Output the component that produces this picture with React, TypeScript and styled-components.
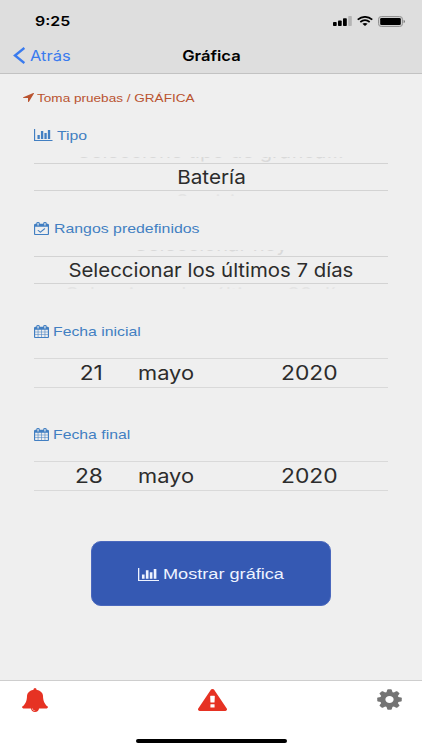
import React from "react";
import styled, { createGlobalStyle } from "styled-components";

const Global = createGlobalStyle`
  * { box-sizing: border-box; }
  html, body { margin: 0; padding: 0; background: #efefef; }
`;

const Screen = styled.div`
  width: 422px;
  height: 750px;
  display: flex;
  flex-direction: column;
  overflow: hidden;
  background: #efefef;
  font-family: "Liberation Sans", Arial, sans-serif;
`;

const Header = styled.header`
  height: 74px;
  flex: none;
  background: #dedede;
  border-bottom: 1px solid #c2c2c2;
  font-family: Inter, sans-serif;
`;

const StatusBar = styled.div`
  height: 37px;
  padding: 5px 17px 0 35px;
  display: flex;
  align-items: center;
  justify-content: space-between;
`;

const StatusIcons = styled.div`
  display: flex;
  align-items: center;
  gap: 5px;
`;

const NavBar = styled.nav`
  height: 37px;
  padding: 0 13px;
  display: grid;
  grid-template-columns: 1fr auto 1fr;
  align-items: center;
`;

const BackButton = styled.a`
  display: flex;
  align-items: center;
  gap: 5px;
  color: #3a7bee;
`;

const Text = styled.span<{ $size: number; $stretch?: number; $weight?: number; $center?: boolean }>`
  display: inline-block;
  white-space: nowrap;
  font-size: ${(p) => p.$size}px;
  font-weight: ${(p) => p.$weight ?? 400};
  line-height: 1.2;
  transform: scaleX(${(p) => p.$stretch ?? 1});
  transform-origin: ${(p) => (p.$center ? "center" : "left")} center;
`;

const Content = styled.main`
  flex: 1;
  padding: 16px 34px 0;
`;

const Breadcrumb = styled.div`
  height: 15px;
  margin-left: -11px;
  display: flex;
  align-items: center;
  gap: 3px;
  color: #b9532f;
`;

const Field = styled.section<{ $top: number }>`
  margin-top: ${(p) => p.$top}px;
`;

const FieldLabel = styled.div<{ $gap: number }>`
  height: 20px;
  display: flex;
  align-items: center;
  gap: ${(p) => p.$gap}px;
  color: #427fc2;
  & > svg { margin-bottom: 2px; }
`;

const FadedRow = styled.div<{ $edge: "top" | "bottom" }>`
  height: ${(p) => (p.$edge === "top" ? 17 : 5)}px;
  display: flex;
  justify-content: center;
  align-items: ${(p) => (p.$edge === "top" ? "flex-end" : "flex-start")};
  overflow: hidden;
  font-family: Inter, sans-serif;
  color: ${(p) => (p.$edge === "top" ? "#d9d9d9" : "#e4e4e4")};
  ${(p) => p.$edge === "top" && "clip-path: inset(11px 0 0 0);"}
`;

const Selected = styled.div`
  height: 28px;
  padding-top: 2px;
  display: flex;
  align-items: center;
  justify-content: center;
  border-top: 1px solid #d3d3d3;
  border-bottom: 1px solid #d3d3d3;
  font-family: Inter, sans-serif;
  color: #2c2c2c;
`;

const DateRow = styled.div`
  height: 30px;
  margin-top: 16px;
  padding-top: 2px;
  display: grid;
  grid-template-columns: 69px 35px 143px auto;
  align-items: center;
  border-top: 1px solid #d9d9d9;
  border-bottom: 1px solid #d9d9d9;
  font-family: Inter, sans-serif;
  color: #2c2c2c;
`;

const Day = styled.div`
  display: flex;
  justify-content: flex-end;
  ${Text} { transform-origin: right center; }
`;

const Gap = styled.div``;

const ChartButton = styled.button`
  width: 240px;
  height: 65px;
  margin: 50px auto 0 57px;
  padding: 1px 0 0 46px;
  display: flex;
  align-items: center;
  gap: 4px;
  border: 1px solid #4a68bd;
  border-radius: 10px;
  background: #3559b3;
  color: #eef3ff;
  font-family: "Liberation Sans", Arial, sans-serif;
`;

const Footer = styled.footer`
  height: 70px;
  flex: none;
  padding-top: 6px;
  border-top: 1px solid #cecece;
  background: #fff;
`;

const Tabs = styled.div`
  height: 25px;
  padding: 0 20px 0 22px;
  display: grid;
  grid-template-columns: 1fr auto 1fr;
  align-items: center;
  & > :last-child { justify-self: end; }
`;

const HomeIndicator = styled.div`
  width: 151px;
  height: 4px;
  margin: 27px auto 0;
  border-radius: 2px;
  background: #000;
`;

const Glyph = styled.svg`
  display: block;
  flex: none;
  fill: currentColor;
`;

type IconProps = { w: number; h: number; box: string; d: string; color?: string };
const Icon = ({ w, h, box, d, color }: IconProps) => (
  <Glyph width={w} height={h} viewBox={box} preserveAspectRatio="none" color={color}>
    <path d={d} />
  </Glyph>
);

const Gear = () => (
  <Glyph width="25" height="21" viewBox="-50 -50 100 100" preserveAspectRatio="none" color="#747474">
    <circle r="27" fill="none" stroke="currentColor" strokeWidth="21" />
    {[0, 45, 90, 135, 180, 225, 270, 315].map((angle) => (
      <path key={angle} transform={`rotate(${angle})`} d="M-12-34L-9-47Q-8-49-6-49H6Q8-49 9-47L12-34Z" />
    ))}
  </Glyph>
);

const FRAME =
  "M576 448V160q0-13-9.5-22.5T544 128h-64q-13 0-22.5 9.5T448 160v288q0 13 9.5 22.5T480 480h64q13 0 22.5-9.5T576 448zm768 0V160q0-13-9.5-22.5T1312 128h-64q-13 0-22.5 9.5T1216 160v288q0 13 9.5 22.5t22.5 9.5h64q13 0 22.5-9.5t9.5-22.5zm384-64v1280q0 52-38 90t-90 38H192q-52 0-90-38t-38-90V384q0-52 38-90t90-38h128v-96q0-66 47-113T480 0h64q66 0 113 47t47 113v96h384v-96q0-66 47-113t113-47h64q66 0 113 47t47 113v96h128q52 0 90 38t38 90z";
const CALENDAR =
  "M192 1664h288v-288H192v288zm352 0h320v-288H544v288zm-352-352h288V992H192v320zm352 0h320V992H544v320zM192 928h288V640H192v288zm736 736h320v-288H928v288zM544 928h320V640H544v288zm768 736h288v-288h-288v288zm-384-352h320V992H928v320zm384 0h288V992h-288v320zM928 928h320V640H928v288zm384 0h288V640h-288v288z" + FRAME;
const CALENDAR_CHECK =
  "M1303 964l-512 512q-10 9-23 9t-23-9l-288-288q-9-10-9-23t9-22l46-46q9-9 22-9t23 9l220 220 444-444q10-9 23-9t22 9l46 46q9 9 9 22t-9 23zM192 1664h1408V640H192v1024z" + FRAME;
const CHART =
  "M640 896v512H384V896h256zm384-512v1024H768V384h256zm1024 1152v128H0V128h128v1408h1920zM1408 640v768h-256V640h256zm384-384v1152h-256V256h256z";
const ARROW =
  "M1593 349l-640 1280q-17 35-57 35-5 0-15-2-22-5-35.5-22.5T832 1600v-576H256q-22 0-39.5-13.5T194 975t4-42 29-30l1280-640q13-7 29-7 27 0 45 19 15 14 18.5 34.5T1593 349z";
const BELL =
  "M912 1696q0-16-16-16-59 0-101.5-42.5T752 1536q0-16-16-16t-16 16q0 73 51.5 124.5T896 1712q16 0 16-16zm816-288q0 52-38 90t-90 38h-448q0 106-75 181t-181 75-181-75-75-181H192q-52 0-90-38t-38-90q50-42 91-88t85-119.5 74.5-158.5 50-206T384 576q0-152 117-282.5T808 135q-8-19-8-39 0-40 28-68t68-28 68 28 28 68q0 20-8 39 190 28 307 158.5T1408 576q0 139 19.5 260t50 206 74.5 158.5 85 119.5 91 88z";
const WARNING =
  "M1024 1375v-190q0-14-9.5-23.5T992 1152H800q-13 0-22.5 9.5T768 1185v190q0 14 9.5 23.5t22.5 9.5h192q13 0 22.5-9.5t9.5-23.5zm-2-374l18-459q0-12-10-19-13-11-24-11H786q-11 0-24 11-10 7-10 21l17 457q0 10 10 16.5t24 6.5h185q14 0 23.5-6.5t10.5-16.5zm-14-934l768 1408q35 63-2 126-17 29-46.5 46t-63.5 17H128q-34 0-63.5-17T18 1601q-37-63-2-126L784 67q17-31 47-49t65-18 65 18 47 49z";

const DateField = ({ label, top, day }: { label: string; top: number; day: string }) => (
  <Field $top={top}>
    <FieldLabel $gap={4}>
      <Icon w={15} h={13} box="64 0 1664 1792" d={CALENDAR} />
      <Text $size={13.5} $stretch={1.17}>{label}</Text>
    </FieldLabel>
    <DateRow>
      <Day><Text $size={19.5} $stretch={1.17}>{day}</Text></Day>
      <Gap />
      <Text $size={19.5} $stretch={1.12}>mayo</Text>
      <Text $size={19.5} $stretch={1.17}>2020</Text>
    </DateRow>
  </Field>
);

export default function App() {
  return (
    <Screen>
      <Global />
      <Header>
        <StatusBar>
          <Text $size={13.5} $weight={600} $stretch={1.18}>9:25</Text>
          <StatusIcons>
            <Glyph width="19" height="10" viewBox="0 0 19 10">
              <rect x="0" y="6" width="3.7" height="4" rx=".8" />
              <rect x="5" y="4.4" width="3.7" height="5.6" rx=".8" />
              <rect x="10" y="2.2" width="3.8" height="7.8" rx=".8" />
              <rect x="15.2" y="0" width="3.6" height="10" rx=".8" fill="#b4b4b4" />
            </Glyph>
            <Glyph width="16" height="10" viewBox="0 0 16 10">
              <g fill="none" stroke="#000" strokeWidth="1.7">
                <path d="M.7 3.6Q8-1.9 15.3 3.6" />
                <path d="M3.3 6Q8 2.4 12.7 6" />
              </g>
              <path d="M5.4 7.8Q8 6 10.6 7.8L8 10Z" />
            </Glyph>
            <Glyph width="27" height="11" viewBox="0 0 27 11">
              <rect x=".5" y=".5" width="24" height="10" rx="2.8" fill="#cfcfcf" stroke="#929292" />
              <rect x="2.2" y="2" width="20.6" height="7" rx="1.3" />
              <path d="M25.6 3.8Q27 4.2 27 5.5T25.6 7.2Z" fill="#777" />
            </Glyph>
          </StatusIcons>
        </StatusBar>
        <NavBar>
          <BackButton>
            <Glyph width="12" height="17" viewBox="0 0 12 17">
              <path d="M11.4 1L2 8.5L11.4 16" fill="none" stroke="currentColor" strokeWidth="2.4" />
            </Glyph>
            <Text $size={14.5} $stretch={1.14}>Atrás</Text>
          </BackButton>
          <Text $size={14.4} $weight={600} $stretch={1.15} $center>Gráfica</Text>
        </NavBar>
      </Header>
      <Content>
        <Breadcrumb>
          <Icon w={11} h={9} box="192 256 1408 1408" d={ARROW} />
          <Text $size={11.6} $stretch={1.17}>Toma pruebas / GRÁFICA</Text>
        </Breadcrumb>
        <Field $top={21}>
          <FieldLabel $gap={4}>
            <Icon w={18.5} h={12} box="0 128 2048 1536" d={CHART} />
            <Text $size={13.5} $stretch={1.17}>Tipo</Text>
          </FieldLabel>
          <FadedRow $edge="top"><Text $size={18} $stretch={1.12} $center>Seleccione tipo de gráfica...</Text></FadedRow>
          <Selected><Text $size={19} $stretch={1.09} $center>Batería</Text></Selected>
          <FadedRow $edge="bottom"><Text $size={18} $center>Servicio</Text></FadedRow>
        </Field>
        <Field $top={23}>
          <FieldLabel $gap={5}>
            <Icon w={15} h={13} box="64 0 1664 1792" d={CALENDAR_CHECK} />
            <Text $size={13.5} $stretch={1.175}>Rangos predefinidos</Text>
          </FieldLabel>
          <FadedRow $edge="top"><Text $size={18} $stretch={1.12} $center>Seleccionar hoy</Text></FadedRow>
          <Selected><Text $size={19} $stretch={1.072} $center>Seleccionar los últimos 7 días</Text></Selected>
          <FadedRow $edge="bottom"><Text $size={18} $stretch={1.1} $center>Seleccionar los últimos 30 días</Text></FadedRow>
        </Field>
        <DateField label="Fecha inicial" top={33} day="21" />
        <DateField label="Fecha final" top={37} day="28" />
        <ChartButton>
          <Icon w={21} h={13} box="0 128 2048 1536" d={CHART} />
          <Text $size={15.5} $stretch={1.17}>Mostrar gráfica</Text>
        </ChartButton>
      </Content>
      <Footer>
        <Tabs>
          <Icon w={26} h={24} box="64 0 1664 1792" d={BELL} color="#e63223" />
          <Icon w={29} h={22} box="0 0 1792 1664" d={WARNING} color="#e63223" />
          <Gear />
        </Tabs>
        <HomeIndicator />
      </Footer>
    </Screen>
  );
}
